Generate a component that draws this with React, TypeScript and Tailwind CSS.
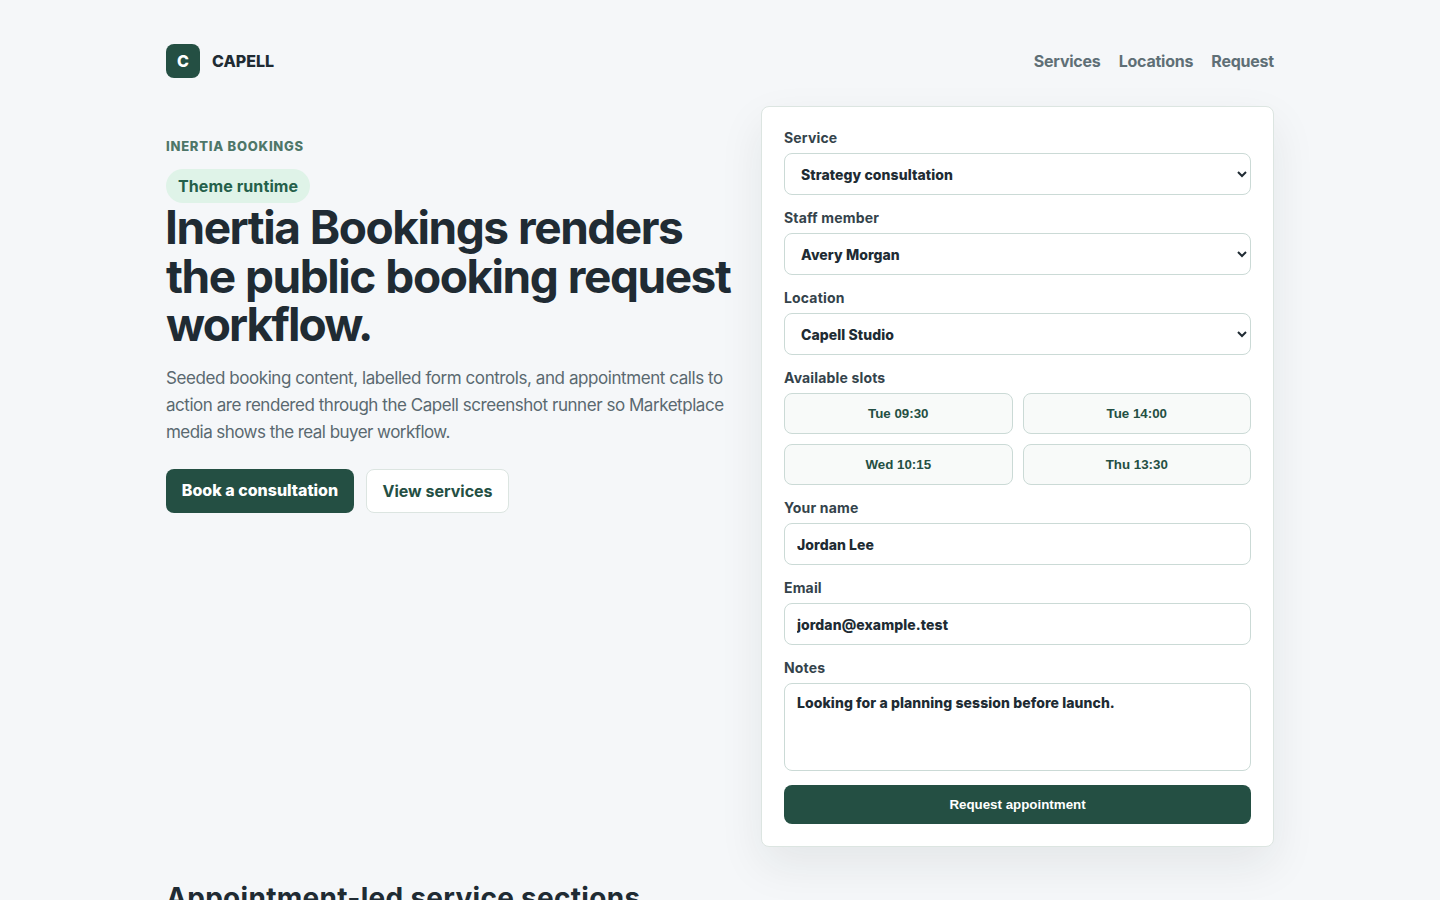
import React from 'react';

const label = "grid gap-[7px] text-[14px] leading-[17px] font-bold tracking-[0.16px] text-[#34434b]";
const field = "h-[42px] w-full rounded-lg border border-[#cbdad6] bg-white px-3 text-[14px] font-extrabold tracking-[0.08px] text-[#202b33]";

function SelectField({ name, value }: { name: string; value: string }) {
  return (
    <label className={label}>
      {name}
      <select className={field} defaultValue={value}>
        <option>{value}</option>
      </select>
    </label>
  );
}

export default function App() {
  return (
    <div className="h-[900px] overflow-hidden bg-[#f5f7f9] font-['Inter',sans-serif] text-[#202b33]">
      <main className="mx-auto w-[1108px] pt-11">
        <header className="flex h-[34px] items-center justify-between">
          <div className="flex items-center gap-3 text-[16px] font-extrabold">
            <span className="grid size-[34px] place-items-center rounded-lg bg-[#244f43] font-extrabold text-white">C</span>
            <span>CAPELL</span>
          </div>
          <nav className="flex gap-[18px] text-[16px] font-[650] tracking-[-0.22px] text-[#5f6f76]">
            <a>Services</a>
            <a>Locations</a>
            <a>Request</a>
          </nav>
        </header>
        <section className="mt-7 grid grid-cols-[567px_513px] items-start gap-7">
          <div className="pt-8">
            <p className="text-[13px] leading-4 font-extrabold tracking-[0.75px] text-[#4e7668]">INERTIA BOOKINGS</p>
            <span className="mt-[15px] flex h-[34px] w-fit items-center rounded-full bg-[#dff3e8] px-3 text-[16px] font-bold tracking-[0.1px] text-[#24604a]">Theme runtime</span>
            <h1 className="text-[46px] leading-[48.5px] font-[750] tracking-[-1.46px] whitespace-nowrap [word-spacing:1px]">
              <span className="-ml-px">Inertia Bookings renders</span><br />the public booking request<br /><span className="tracking-[-1.85px]">workflow.</span>
            </h1>
            <p className="mt-4 text-[17px] leading-[27px] tracking-[-0.43px] whitespace-nowrap text-[#5a6970]">
              Seeded booking content, labelled form controls, and appointment calls to<br /><span className="tracking-[-0.46px]">action are rendered through the Capell screenshot runner so Marketplace</span><br /><span className="tracking-[-0.55px]">media shows the real buyer workflow.</span>
            </p>
            <div className="mt-[23px] flex gap-3 text-[16px] font-bold">
              <a className="flex h-11 w-[188px] items-center justify-center rounded-lg bg-[#244f43] pb-0.5 font-extrabold whitespace-nowrap text-white">Book a consultation</a>
              <a className="flex h-11 w-[143px] items-center justify-center rounded-lg border border-[#dce5e1] bg-white whitespace-nowrap text-[#244f43]">View services</a>
            </div>
          </div>
          <form className="grid gap-[14px] rounded-lg border border-[#dce5e1] bg-white p-[22px] shadow-[0_18px_45px_rgba(30,32,32,0.08)]">
            <SelectField name="Service" value="Strategy consultation" />
            <SelectField name="Staff member" value="Avery Morgan" />
            <SelectField name="Location" value="Capell Studio" />
            <div className={label}>
              Available slots
              <div className="grid grid-cols-2 gap-[10px]">
                {['Tue 09:30', 'Tue 14:00', 'Wed 10:15', 'Thu 13:30'].map((slot) => (
                  <button key={slot} type="button" className="h-[41px] rounded-lg border border-[#cbdad6] bg-[#f8faf9] font-['Liberation_Sans',sans-serif] text-[13.333px] font-bold tracking-normal text-[#244f43]">{slot}</button>
                ))}
              </div>
            </div>
            <label className={label}>Your name<input className={field} defaultValue="Jordan Lee" /></label>
            <label className={label}>Email<input className={field} defaultValue="jordan@example.test" /></label>
            <label className={label}>Notes<textarea className="h-[88px] resize-none rounded-lg border border-[#cbdad6] bg-white px-3 py-[10px] text-[14px] font-extrabold tracking-[0.08px] text-[#202b33]" defaultValue="Looking for a planning session before launch." /></label>
            <button type="button" className="h-[39px] rounded-lg bg-[#244f43] font-['Liberation_Sans',sans-serif] text-[13.333px] font-bold text-white">Request appointment</button>
          </form>
        </section>
        <h2 className="mt-[34px] text-[28px] leading-[34px] font-[750] tracking-[0.29px]">Appointment-led service sections</h2>
      </main>
    </div>
  );
}
